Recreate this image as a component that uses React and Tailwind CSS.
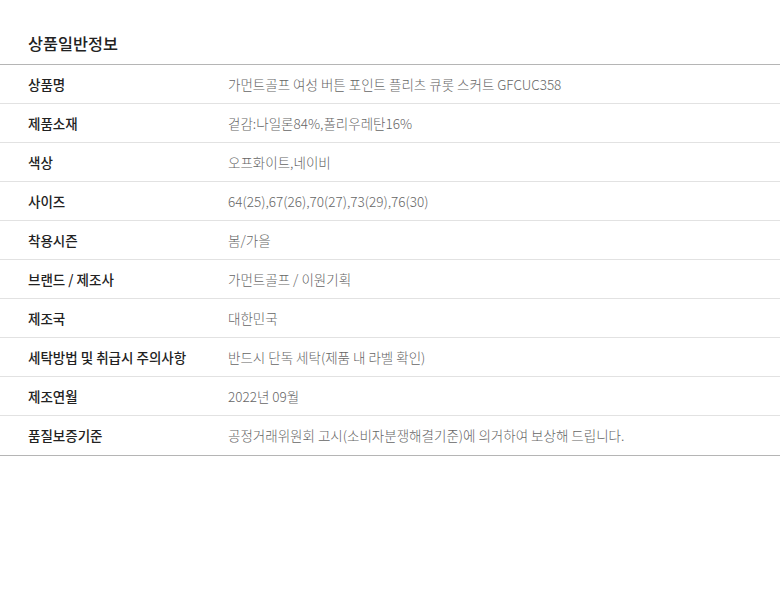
const rows = [
  ['상품명', '가먼트골프 여성 버튼 포인트 플리츠 큐롯 스커트 GFCUC358'],
  ['제품소재', '겉감:나일론84%,폴리우레탄16%'],
  ['색상', '오프화이트,네이비'],
  ['사이즈', '64(25),67(26),70(27),73(29),76(30)'],
  ['착용시즌', '봄/가을'],
  ['브랜드 / 제조사', '가먼트골프 / 이원기획'],
  ['제조국', '대한민국'],
  ['세탁방법 및 취급시 주의사항', '반드시 단독 세탁(제품 내 라벨 확인)'],
  ['제조연월', '2022년 09월'],
  ['품질보증기준', '공정거래위원회 고시(소비자분쟁해결기준)에 의거하여 보상해 드립니다.'],
];

export default function App() {
  return (
    <div className="w-[780px] h-[592px] bg-white font-['Noto_Sans_CJK_KR','Noto_Sans',sans-serif]">
      {/* Title */}
      <div className="h-[64px] pt-[30px] px-[28px] text-[16.3px] leading-[26px] font-medium text-[#222]">
        상품일반정보
      </div>

      {/* Info table */}
      <div className="border-t border-b border-[#b5b5b5]">
        {rows.map(([label, value], i) => (
          <div
            key={label}
            className={
              i < rows.length - 1
                ? 'flex items-center h-[39px] border-b border-[#e2e2e2] text-[13.5px]'
                : 'flex items-center h-[39px] text-[13.5px]'
            }
          >
            <div className="w-[228px] pl-[28px] font-medium text-[#222]">{label}</div>
            <div className="flex-1 text-[#666] font-light">{value}</div>
          </div>
        ))}
      </div>
    </div>
  );
}
